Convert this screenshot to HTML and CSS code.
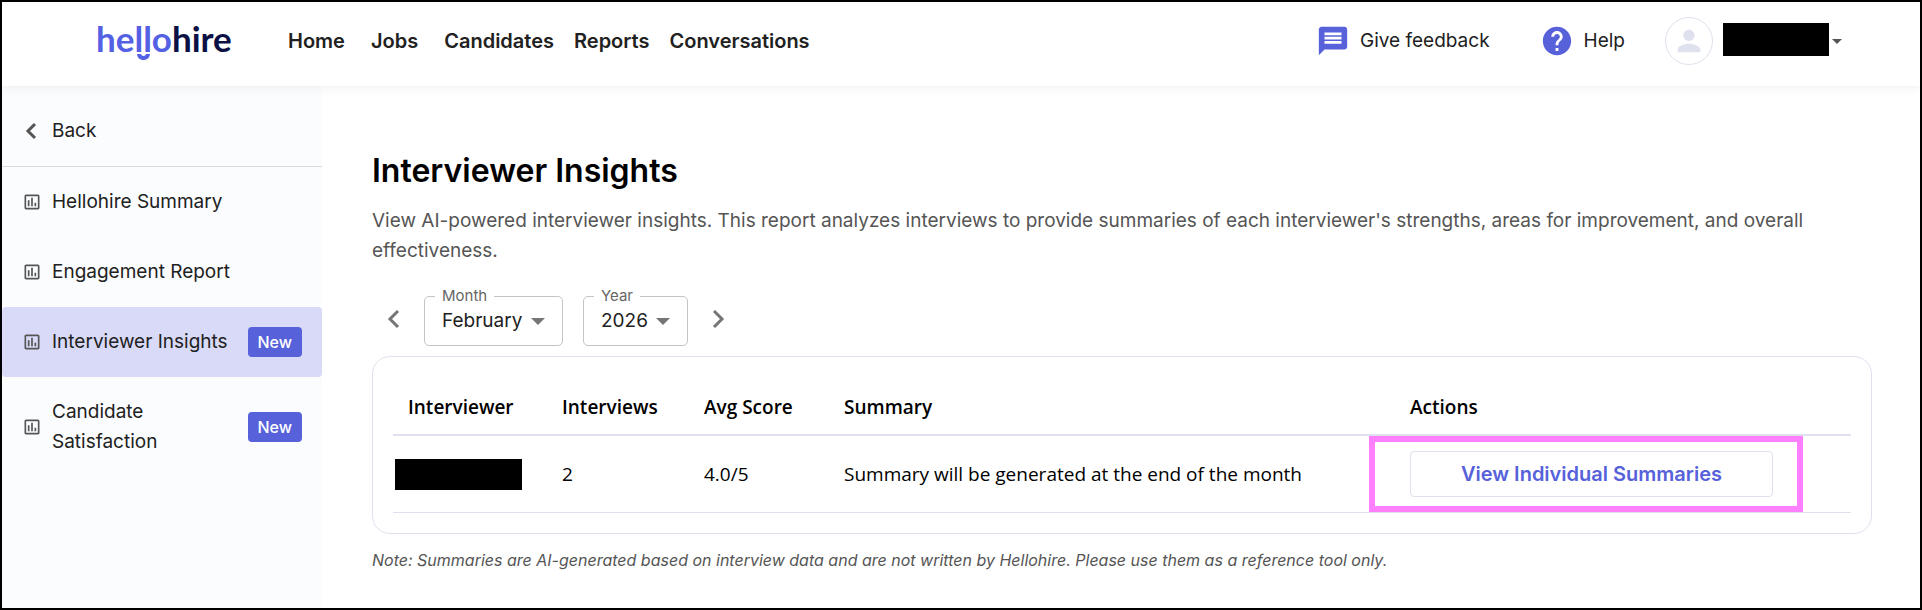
FILE: index.html
```html
<!DOCTYPE html>
<html lang="en">
<head>
  <meta charset="UTF-8" />
  <meta name="viewport" content="width=device-width, initial-scale=1.0" />
  <title>Interviewer Insights</title>
  <link rel="stylesheet" href="styles.css">
</head>
<body>
  <!-- shared icon for the report links -->
  <svg class="sprite" width="0" height="0" aria-hidden="true">
    <symbol id="icon-chart" viewBox="0 0 24 24">
      <path d="M9 17H7v-7h2v7zm4 0h-2V7h2v10zm4 0h-2v-4h2v4zm2 2H5V5h14v14zm0-16H5c-1.100 0-2 .9-2 2v14c0 1.100.9 2 2 2h14c1.100 0 2-.9 2-2V5c0-1.100-.9-2-2-2z"/>
    </symbol>
  </svg>

  <header class="header">
    <a href="#" class="logo" aria-label="hellohire">
      <span class="logo-hello">hello</span><span class="logo-hire">hire</span>
      <svg class="logo-smile" width="13" height="7" viewBox="0 0 13 7" aria-hidden="true">
        <path d="M0 0h4c.3 1.300 1.200 2 2.500 2S8.700 1.300 9 0h4c-.3 3.800-2.900 6-6.500 6S.3 3.800 0 0z" fill="#5461e4"/>
      </svg>
    </a>
    <nav class="nav">
      <a href="#" class="nav-short">Home</a>
      <a href="#" class="nav-short">Jobs</a>
      <a href="#">Candidates</a>
      <a href="#">Reports</a>
      <a href="#">Conversations</a>
    </nav>
    <div class="header-right">
      <a href="#" class="header-link feedback">
        <svg width="34" height="34" viewBox="0 0 24 24" aria-hidden="true"><path d="M20 2H4c-1.100 0-2 .9-2 2v18l4-4h14c1.100 0 2-.9 2-2V4c0-1.100-.9-2-2-2zm-2 12H6v-2h12v2zm0-3H6V9h12v2zm0-3H6V6h12v2z"/></svg>
        Give feedback
      </a>
      <a href="#" class="header-link help">
        <svg width="34" height="34" viewBox="0 0 24 24" aria-hidden="true"><path d="M12 2C6.480 2 2 6.480 2 12s4.480 10 10 10 10-4.480 10-10S17.520 2 12 2zm1 17h-2v-2h2v2zm2.070-7.750l-.9.920C13.450 12.900 13 13.500 13 15h-2v-.5c0-1.100.45-2.100 1.170-2.830l1.240-1.260c.37-.36.590-.86.590-1.410 0-1.100-.9-2-2-2s-2 .9-2 2H8c0-2.210 1.790-4 4-4s4 1.790 4 4c0 .88-.36 1.680-.93 2.250z"/></svg>
        Help
      </a>
      <button type="button" class="account" aria-label="Account menu">
        <span class="avatar">
          <svg width="34" height="34" viewBox="0 0 24 24" aria-hidden="true"><path d="M12 12c2.210 0 4-1.790 4-4s-1.790-4-4-4-4 1.790-4 4 1.790 4 4 4zm0 2c-2.670 0-8 1.340-8 4v2h16v-2c0-2.660-5.330-4-8-4z"/></svg>
        </span>
        <span class="redacted account-name"></span>
        <span class="caret"></span>
      </button>
    </div>
  </header>

  <div class="layout">
    <aside class="sidebar">
      <a href="#" class="side-item back">
        <svg class="back-icon" width="20" height="20" viewBox="0 0 20 20" aria-hidden="true"><path d="M13 3L6 10l7 7"/></svg>
        <span class="side-label">Back</span>
      </a>
      <a href="#" class="side-item">
        <svg class="side-icon"><use href="#icon-chart"/></svg>
        <span class="side-label">Hellohire Summary</span>
      </a>
      <a href="#" class="side-item">
        <svg class="side-icon"><use href="#icon-chart"/></svg>
        <span class="side-label">Engagement Report</span>
      </a>
      <a href="#" class="side-item active">
        <svg class="side-icon"><use href="#icon-chart"/></svg>
        <span class="side-label">Interviewer Insights</span>
        <span class="badge">New</span>
      </a>
      <a href="#" class="side-item">
        <svg class="side-icon"><use href="#icon-chart"/></svg>
        <span class="side-label">Candidate Satisfaction</span>
        <span class="badge">New</span>
      </a>
    </aside>

    <main class="content">
      <h1>Interviewer Insights</h1>
      <p class="description">View AI-powered interviewer insights. This report analyzes interviews to provide summaries of each interviewer's strengths, areas for improvement, and overall effectiveness.</p>

      <div class="period">
        <button type="button" class="arrow" aria-label="Previous month">
          <svg width="20" height="20" viewBox="0 0 20 20" aria-hidden="true"><path d="M14 2L6 10l8 8"/></svg>
        </button>
        <div class="field month">
          <label for="month">Month</label>
          <select id="month">
            <option>January</option>
            <option selected>February</option>
            <option>March</option>
            <option>April</option>
            <option>May</option>
            <option>June</option>
            <option>July</option>
            <option>August</option>
            <option>September</option>
            <option>October</option>
            <option>November</option>
            <option>December</option>
          </select>
          <span class="field-caret"></span>
        </div>
        <div class="field year">
          <label for="year">Year</label>
          <select id="year">
            <option>2025</option>
            <option selected>2026</option>
          </select>
          <span class="field-caret"></span>
        </div>
        <button type="button" class="arrow" aria-label="Next month">
          <svg width="20" height="20" viewBox="0 0 20 20" aria-hidden="true"><path d="M6 2l8 8-8 8"/></svg>
        </button>
      </div>

      <div class="card">
        <table>
          <colgroup>
            <col class="col-interviewer">
            <col class="col-interviews">
            <col class="col-score">
            <col>
            <col class="col-actions">
          </colgroup>
          <thead>
            <tr>
              <th>Interviewer</th>
              <th>Interviews</th>
              <th>Avg Score</th>
              <th>Summary</th>
              <th>Actions</th>
            </tr>
          </thead>
          <tbody>
            <tr>
              <td class="cell-name"><span class="redacted"></span></td>
              <td>2</td>
              <td>4.0/5</td>
              <td>Summary will be generated at the end of the month</td>
              <td class="cell-actions">
                <button type="button" class="view-button">View Individual Summaries</button>
                <span class="highlight"></span>
              </td>
            </tr>
          </tbody>
        </table>
      </div>

      <p class="note">Note: Summaries are AI-generated based on interview data and are not written by Hellohire. Please use them as a reference tool only.</p>
    </main>
  </div>
</body>
</html>
```

FILE: styles.css
```css
* {
  box-sizing: border-box;
}

body {
  margin: 0;
  min-height: 100vh;
  display: flex;
  flex-direction: column;
  border: 2px solid #000;
  background: #fff;
  font-family: Inter, "Liberation Sans", sans-serif;
  font-size: 19px;
  line-height: 30px;
  color: #212121;
}

a {
  color: inherit;
  text-decoration: none;
}

button {
  font: inherit;
  cursor: pointer;
}

.sprite {
  position: absolute;
}

.redacted {
  display: block;
  background: #000;
}

/* header */
.header {
  position: relative;
  z-index: 1;
  display: flex;
  align-items: center;
  min-height: 84px;
  padding: 0 78px 6px 94px;
  background: #fff;
  box-shadow: 0 2px 10px rgba(0, 0, 0, 0.06);
}

.logo {
  position: relative;
  flex: none;
  width: 192px;
  padding-bottom: 6px;
  font-family: Lato, sans-serif;
  font-size: 35px;
  font-weight: 700;
  line-height: 40px;
}

.logo-hello {
  color: #5461e4;
}

.logo-hire {
  color: #0b1045;
}

/* smile under the double l */
.logo-smile {
  position: absolute;
  left: 41px;
  top: 36px;
}

.nav {
  display: flex;
  gap: 20px;
  font-size: 20px;
  font-weight: 600;
}

.nav-short {
  padding-right: 6px;
}

.header-right {
  display: flex;
  align-items: center;
  margin-left: auto;
}

.header-link {
  display: flex;
  align-items: center;
  gap: 10px;
}

.header-link svg {
  fill: #5661da;
}

.feedback {
  margin-right: 50px;
}

.help {
  margin-right: 40px;
}

.account {
  display: flex;
  align-items: center;
  padding: 0;
  border: none;
  background: none;
}

.avatar {
  display: flex;
  align-items: center;
  justify-content: center;
  width: 48px;
  height: 48px;
  margin-right: 10px;
  border: 1px solid #dfe1ee;
  border-radius: 50%;
}

.avatar svg {
  fill: #dfe1ee;
}

.account-name {
  width: 106px;
  height: 33px;
  margin-bottom: 4px;
}

.caret {
  margin-left: 3px;
  border: 5px solid transparent;
  border-top-color: #555;
  border-bottom: none;
}

/* sidebar */
.layout {
  flex: 1;
  display: flex;
}

.sidebar {
  flex: none;
  width: 320px;
  padding-top: 10px;
  background: #fbfcfe;
}

.side-item {
  display: flex;
  align-items: center;
  padding: 20px;
  border-radius: 4px;
}

.back {
  border-bottom: 1px solid #d9dbe0;
  border-radius: 0;
}

.active {
  background: #d8daf8;
}

.side-icon {
  flex: none;
  width: 20px;
  height: 20px;
  fill: #555;
}

.back-icon {
  flex: none;
  width: 20px;
  fill: none;
  stroke: #555;
  stroke-width: 3;
}

.side-label {
  flex: 1;
  margin-left: 10px;
}

.badge {
  padding: 0 10px;
  border-radius: 4px;
  background: #5661da;
  color: #fff;
  font-size: 16px;
  font-weight: 500;
}

/* content */
.content {
  flex: 1;
  min-width: 0;
  padding: 65px 48px 20px 50px;
}

h1 {
  margin: 0 0 15px;
  font-size: 32px;
  font-weight: 600;
  line-height: 40px;
  color: #000;
}

.description {
  margin: 0 0 30px;
  color: #555;
}

.period {
  display: flex;
  align-items: center;
  gap: 20px;
  margin-bottom: 10px;
}

.arrow {
  display: flex;
  padding: 0 0 4px 12px;
  border: none;
  background: none;
}

.arrow:last-child {
  padding: 0 0 4px;
}

.arrow svg {
  fill: none;
  stroke: #757575;
  stroke-width: 3;
}

.field {
  position: relative;
}

.field label {
  position: absolute;
  top: -10px;
  left: 11px;
  padding: 0 7px;
  background: #fff;
  font-size: 15px;
  line-height: 20px;
  color: #666;
}

.field select {
  width: 100%;
  height: 50px;
  padding: 0 17px;
  border: 1px solid #c4c4c4;
  border-radius: 5px;
  appearance: none;
  background: transparent;
  font: inherit;
  color: #212121;
}

.month {
  width: 139px;
}

.year {
  width: 105px;
}

.field-caret {
  position: absolute;
  right: 18px;
  top: 22px;
  border: 7px solid transparent;
  border-top-color: #757575;
  border-bottom: none;
  pointer-events: none;
}

.card {
  padding: 20px;
  border: 1px solid #dfe1ee;
  border-radius: 18px;
}

table {
  width: 100%;
  table-layout: fixed;
  border-spacing: 0;
  font-family: "Open Sans", "Noto Sans", sans-serif;
  color: #000;
}

.col-interviewer {
  width: 154px;
}

.col-interviews {
  width: 142px;
}

.col-score {
  width: 140px;
}

.col-actions {
  width: 456px;
}

th {
  padding: 15px 15px 12px;
  border-bottom: 2px solid #dfe1ee;
  font-weight: 600;
  text-align: left;
}

td {
  padding: 15px;
  border-bottom: 1px solid #dfe1ee;
}

.cell-name {
  padding: 0 2px;
}

.cell-name .redacted {
  width: 127px;
  height: 31px;
}

.cell-actions {
  position: relative;
}

.view-button {
  display: block;
  width: 363px;
  height: 46px;
  border: 1px solid #dfe1ee;
  border-radius: 4px;
  background: #fff;
  color: #5661da;
  font-family: Inter, "Liberation Sans", sans-serif;
  font-size: 20px;
  font-weight: 600;
}

/* frame around the action */
.highlight {
  position: absolute;
  top: 0;
  bottom: 0;
  left: -26px;
  width: 434px;
  border: 6px solid #ff80ff;
  pointer-events: none;
}

.note {
  margin: 11px 0 0;
  font-size: 16px;
  font-style: italic;
  color: #555;
}
```
